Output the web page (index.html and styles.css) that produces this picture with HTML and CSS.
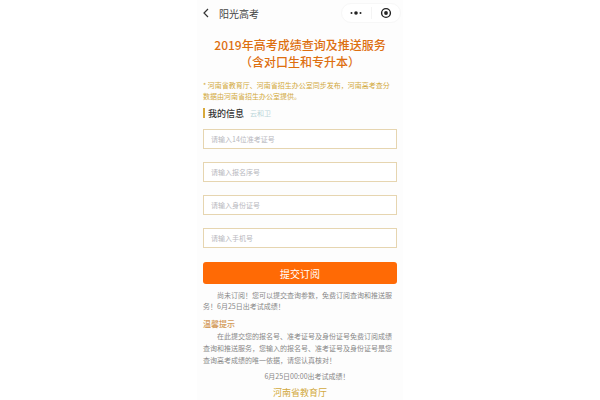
FILE: index.html
```html
<!DOCTYPE html>
<html lang="zh-CN">
  <head>
    <meta charset="UTF-8" />
    <meta name="viewport" content="width=device-width, initial-scale=1.0" />
    <title>阳光高考</title>
    <link rel="stylesheet" href="styles.css">
  </head>
  <body>
    <div class="container">
      <header class="navbar">
        <a class="back" href="#" aria-label="返回">
          <svg width="6" height="10" viewBox="0 0 6 10">
            <path d="M5 1 L1 5 L5 9" fill="none" stroke="#333" stroke-width="1.2" />
          </svg>
        </a>
        <span class="app-name">阳光高考</span>
        <div class="capsule">
          <button type="button" aria-label="更多">
            <svg width="12" height="6" viewBox="0 0 12 6">
              <circle cx="1.5" cy="3" r="1" />
              <circle cx="6" cy="3" r="1.8" />
              <circle cx="10.5" cy="3" r="1" />
            </svg>
          </button>
          <button type="button" aria-label="关闭">
            <svg width="12" height="12" viewBox="0 0 12 12">
              <circle cx="6" cy="6" r="4.4" fill="none" stroke="#222" stroke-width="1.4" />
              <circle cx="6" cy="6" r="1.9" />
            </svg>
          </button>
        </div>
      </header>

      <main class="content">
        <h1>2019年高考成绩查询及推送服务<br />（含对口生和专升本）</h1>
        <p class="notice">* 河南省教育厅、河南省招生办公室同步发布，河南高考查分数据由河南省招生办公室提供。</p>

        <h2 class="section-title">我的信息 <span class="user">云和卫</span></h2>

        <form class="form">
          <input type="text" name="ticket" placeholder="请输入14位准考证号" aria-label="准考证号" />
          <input type="text" name="serial" placeholder="请输入报名序号" aria-label="报名序号" />
          <input type="text" name="idcard" placeholder="请输入身份证号" aria-label="身份证号" />
          <input type="tel" name="phone" placeholder="请输入手机号" aria-label="手机号" />
          <button type="submit" class="btn">提交订阅</button>
        </form>

        <p class="status">尚未订阅！您可以提交查询参数，免费订阅查询和推送服务！6月25日出考试成绩！</p>

        <h3 class="tips-title">温馨提示</h3>
        <p class="tips">在此提交您的报名号、准考证号及身份证号免费订阅成绩查询和推送服务，您输入的报名号、准考证号及身份证号是您查询高考成绩的唯一依据，请您认真核对！</p>
        <p class="date">6月25日00:00出考试成绩！</p>
        <footer class="footer">河南省教育厅</footer>
      </main>
    </div>
  </body>
</html>
```
FILE: styles.css
```css
* {
  box-sizing: border-box;
}

body {
  font-family: "Noto Sans CJK SC", "Noto Sans", sans-serif;
  margin: 0;
  background-color: #ffffff;
}

h1,
h2,
h3,
p {
  margin: 0;
}

.container {
  width: 100%;
  max-width: 206px;
  min-height: 100vh;
  margin: 0 auto;
  background-color: #fdfdfd;
}

.navbar {
  display: flex;
  align-items: center;
  height: 26px;
  padding: 0 2px 0 6px;
}

.back {
  display: flex;
  width: 16px;
}

.app-name {
  font-size: 10px;
  color: #444444;
}

.capsule {
  display: flex;
  align-items: center;
  width: 60px;
  height: 20px;
  margin-left: auto;
  background-color: #ffffff;
  border: 1px solid #f7f7f7;
  border-radius: 10px;
}

.capsule button {
  display: flex;
  flex: 1;
  justify-content: center;
  align-items: center;
  padding: 0;
  background: none;
  border: none;
  fill: #222222;
  cursor: pointer;
}

.capsule button + button {
  border-left: 1px solid #f4f4f4;
}

.content {
  padding: 10px 6px 0;
}

h1 {
  font-size: 12px;
  line-height: 17px;
  font-weight: 500;
  text-align: center;
  color: #dd6f10;
}

.notice {
  margin-top: 10px;
  padding-right: 4px;
  font-size: 7px;
  line-height: 11px;
  color: #d2a93c;
}

.section-title {
  display: flex;
  align-items: center;
  height: 10px;
  margin-top: 6px;
  padding-left: 3px;
  border-left: 2px solid #d9a93a;
  font-size: 9px;
  font-weight: 500;
  color: #333333;
}

.user {
  margin-left: 6px;
  font-size: 7px;
  font-weight: 400;
  color: #bcd6da;
}

.form {
  display: flex;
  flex-direction: column;
  gap: 13px;
  margin-top: 11px;
}

.form input {
  width: 100%;
  height: 20px;
  padding: 0 7px;
  background-color: #ffffff;
  border: 1px solid #e6d5b0;
  border-radius: 0;
  font-family: inherit;
  font-size: 7px;
  color: #555555;
}

.form input::placeholder {
  color: #b8b8be;
}

.btn {
  height: 22px;
  margin-top: 1px;
  padding: 0;
  font-family: inherit;
  font-size: 10px;
  color: #ffffff;
  background-color: #ff6a05;
  border: none;
  border-radius: 3px;
  cursor: pointer;
}

.status {
  margin-top: 6px;
  font-size: 7px;
  line-height: 11px;
  text-indent: 2em;
  color: #888888;
}

.tips-title {
  margin-top: 6px;
  font-size: 8px;
  line-height: 12px;
  font-weight: 500;
  color: #d39a58;
}

.tips {
  font-size: 7px;
  line-height: 12px;
  text-indent: 2em;
  color: #888888;
}

.date {
  margin-top: 4px;
  font-size: 7px;
  line-height: 12px;
  text-align: center;
  text-indent: 2em;
  color: #888888;
}

.footer {
  margin-top: 4px;
  font-size: 9px;
  line-height: 13px;
  text-align: center;
  color: #d2a93c;
}
```
